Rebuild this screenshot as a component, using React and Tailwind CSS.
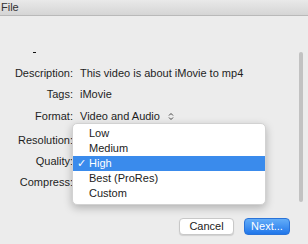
import React from 'react'

const rows = [
  { label: 'Description:', value: 'This video is about iMovie to mp4', mt: 'mt-[50px]' },
  { label: 'Tags:', value: 'iMovie', mt: 'mt-[7px]' },
  { label: 'Format:', value: 'Video and Audio', mt: 'mt-[8px]', select: true },
  { label: 'Resolution:', value: '', mt: 'mt-[10px]' },
  { label: 'Quality:', value: '', mt: 'mt-[7px]' },
  { label: 'Compress:', value: '', mt: 'mt-[7px]' },
]

const options = ['Low', 'Medium', 'High', 'Best (ProRes)', 'Custom']

const UpDown = () => (
  <svg width="6" height="9" viewBox="0 0 6 9" className="ml-[8px]">
    <path d="M1 3.5 L3 1.5 L5 3.5" fill="none" stroke="#444" strokeWidth="1" />
    <path d="M1 5.5 L3 7.5 L5 5.5" fill="none" stroke="#444" strokeWidth="1" />
  </svg>
)

const App = () => {
  return (
    <div className="relative w-[308px] h-[244px] overflow-hidden bg-[#ececec] text-[11px] text-[#1e1e1e]" style={{ fontFamily: '"Liberation Sans", Arial, sans-serif' }}>
      {/* barre de titre */}
      <div className="h-[16px] bg-gradient-to-b from-[#e9e9e9] to-[#d5d5d5] border-b border-[#b9b9b9] flex items-center pl-[1px]">
        <span className="text-[#333] leading-none">File</span>
      </div>

      {/* petite trace d'une ligne cachée */}
      <div className="absolute left-[33px] top-[52px] w-[3px] h-[1px] bg-[#111]"></div>

      {/* formulaire */}
      <div className="flex flex-col">
        {rows.map((r) => (
          <div key={r.label} className={`flex items-center h-[14px] leading-[14px] ${r.mt}`}>
            <div className="w-[73px] text-right shrink-0">{r.label}</div>
            <div className="pl-[7px] flex items-center whitespace-nowrap">
              {r.value}
              {r.select && <UpDown />}
            </div>
          </div>
        ))}
      </div>

      {/* menu déroulant */}
      <div className="absolute left-[72px] top-[123px] w-[194px] bg-white rounded-[5px] border border-[#d2d2d2] shadow-[0_3px_8px_rgba(0,0,0,0.25)] pt-[2px] pb-[3px]">
        {options.map((o) => (
          <div
            key={o}
            className={`flex items-center h-[15px] leading-[15px] ${o === 'High' ? 'bg-[#3a8bec] text-white' : 'text-[#222]'}`}
          >
            <span className="w-[16px] pl-[4px] text-[11px]">{o === 'High' ? '✓' : ''}</span>
            <span>{o}</span>
          </div>
        ))}
      </div>

      {/* barre de défilement */}
      <div className="absolute left-[299px] top-[52px] w-[4px] h-[150px] rounded-full bg-[#c2c2c2]"></div>

      {/* boutons */}
      <div className="absolute left-0 right-0 top-[218px] flex justify-end gap-[10px] pr-[18px]">
        <button className="w-[55px] h-[17px] leading-[15px] bg-white border border-[#c8c8c8] rounded-[4px] shadow-[0_1px_1px_rgba(0,0,0,0.12)] text-[#222]">
          Cancel
        </button>
        <button className="w-[46px] h-[17px] leading-[15px] bg-gradient-to-b from-[#63adf8] to-[#1f76ea] border border-[#2a73d8] rounded-[4px] text-white">
          Next...
        </button>
      </div>
    </div>
  )
}

export default App
